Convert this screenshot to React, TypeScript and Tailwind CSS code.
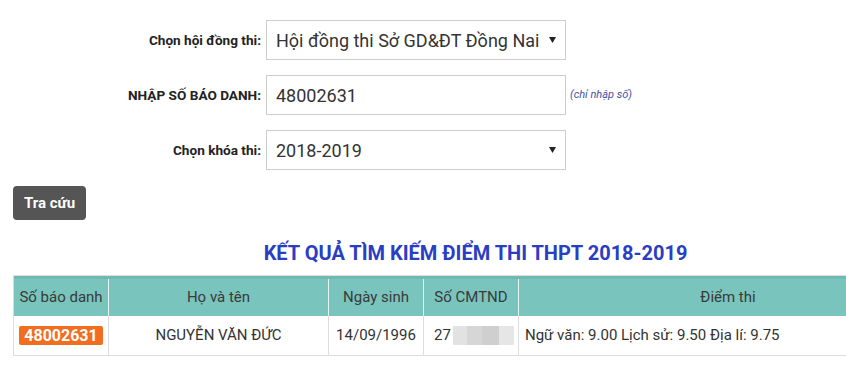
import React from "react";

function Caret() {
  return (
    <svg width="7" height="6" viewBox="0 0 7 6" className="shrink-0">
      <path d="M0 0 H7 L3.5 6 Z" fill="#222" />
    </svg>
  );
}

export default function App() {
  return (
    <div className="h-[367px] w-[846px] overflow-hidden bg-white">
      <div className="w-[951px] px-[13px] pt-[20px] font-['Roboto',sans-serif] text-[#333]">
        {/* Row 1 */}
        <div className="flex items-center">
          <div className="w-[249px] pr-[1px] text-right text-[13.6px] font-bold text-[#222]">Chọn hội đồng thi:</div>
          <div className="ml-[4px] flex h-[40px] w-[300px] items-center justify-between border border-[#ccc] pl-[9px] pr-[9px] text-[18px] text-[#333]">
            <span>Hội đồng thi Sở GD&amp;ĐT Đồng Nai</span>
            <Caret />
          </div>
        </div>
        {/* Row 2 */}
        <div className="mt-[15px] flex items-center">
          <div className="w-[249px] pr-[1px] text-right text-[13.6px] font-bold text-[#222]">NHẬP SỐ BÁO DANH:</div>
          <div className="ml-[4px] flex h-[40px] w-[300px] items-center border border-[#ccc] pl-[9px] text-[18px] text-[#333]">
            48002631
          </div>
          <span className="ml-[4px] text-[11px] italic text-[#3f4fa8]">(chỉ nhập số)</span>
        </div>
        {/* Row 3 */}
        <div className="mt-[15px] flex items-center">
          <div className="w-[249px] pr-[1px] text-right text-[13.6px] font-bold text-[#222]">Chọn khóa thi:</div>
          <div className="ml-[4px] flex h-[40px] w-[300px] items-center justify-between border border-[#ccc] pl-[9px] pr-[9px] text-[18px] text-[#333]">
            <span>2018-2019</span>
            <Caret />
          </div>
        </div>
        {/* Button */}
        <div className="mt-[16px] flex">
          <div className="flex h-[34px] w-[73px] items-center justify-center rounded-[4px] bg-[#555555] text-[15px] font-bold text-white">
            Tra cứu
          </div>
        </div>
        {/* Title */}
        <div className="mt-[21px] text-center text-[20px] font-bold leading-[24px] text-[#2a3ec4]">
          KẾT QUẢ TÌM KIẾM ĐIỂM THI THPT 2018-2019
        </div>
        {/* Table */}
        <div className="mt-[10px] w-[925px] border border-[#ddd] text-[15px]">
          <div className="grid grid-cols-[95px_220px_95px_95px_1fr] border-t-[3px] border-t-[#6fbab2] bg-[#79c4bd] text-[#3a3a3a]">
            <div className="flex h-[37px] items-center justify-center border-r border-[#e8f4f2]">Số báo danh</div>
            <div className="flex items-center justify-center border-r border-[#e8f4f2]">Họ và tên</div>
            <div className="flex items-center justify-center border-r border-[#e8f4f2]">Ngày sinh</div>
            <div className="flex items-center justify-center border-r border-[#e8f4f2]">Số CMTND</div>
            <div className="flex items-center justify-center">Điểm thi</div>
          </div>
          <div className="grid grid-cols-[95px_220px_95px_95px_1fr] text-[#333]">
            <div className="flex h-[39px] items-center justify-center border-r border-[#ddd]">
              <span className="rounded-[2px] bg-[#f26d1d] px-[5px] text-[16px] font-bold leading-[19px] text-white">48002631</span>
            </div>
            <div className="flex items-center justify-center border-r border-[#ddd]">NGUYỄN VĂN ĐỨC</div>
            <div className="flex items-center justify-center border-r border-[#ddd]">14/09/1996</div>
            <div className="flex items-center overflow-hidden border-r border-[#ddd] pl-[10px]">
              <span>27</span>
              <div className="ml-[2px] flex h-[19px] shrink-0">
                <div className="w-[14px] bg-[#e2e2e2]" />
                <div className="w-[15px] bg-[#d6d6d6]" />
                <div className="w-[17px] bg-[#cfcfcf]" />
                <div className="w-[15px] bg-[#e6e6e6]" />
              </div>
            </div>
            <div className="flex items-center pl-[6px]">Ngữ văn: 9.00 Lịch sử: 9.50 Địa lí: 9.75</div>
          </div>
        </div>
      </div>
    </div>
  );
}
